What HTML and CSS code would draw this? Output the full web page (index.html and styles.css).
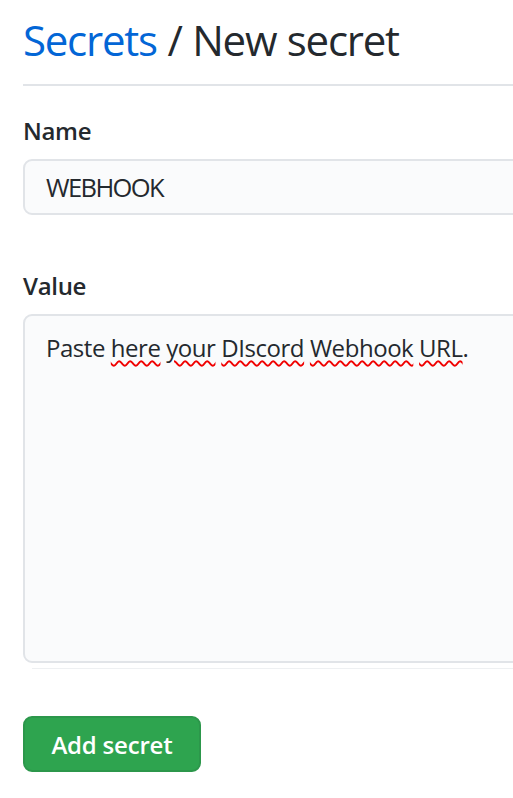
FILE: index.html
```html
<!DOCTYPE html>
<html lang="en">
<head>
<meta charset="utf-8">
<title>New secret</title>
<link rel="stylesheet" href="styles.css">
</head>
<body>
<div class="page">
  <h2 class="subhead"><a class="crumb" href="#">Secrets</a> / New secret</h2>
  <form class="form">
    <label class="label" for="name">Name</label>
    <div class="input">WEBHOOK</div>
    <label class="label label-value" for="value">Value</label>
    <div class="textarea">Paste <span class="sp">here</span> <span class="sp">your</span> <span class="sp">DIscord</span> <span class="sp">Webhook</span> <span class="sp">URL</span>.</div>
    <div class="sep"></div>
    <button class="btn" type="button">Add secret</button>
  </form>
</div>
</body>
</html>
```
FILE: styles.css
```css
html, body {
  margin: 0;
  padding: 0;
  background: #ffffff;
  overflow: hidden;
}
body {
  font-family: "Open Sans", "Noto Sans", sans-serif;
  color: #24292e;
}
.page {
  width: 620px;
  padding: 14px 0 0 23px;
}
.subhead {
  margin: 0;
  font-size: 42px;
  font-weight: 400;
  line-height: 52px;
  padding-bottom: 18px;
  border-bottom: 2px solid #e1e4e8;
  letter-spacing: -1.25px;
  word-spacing: 1px;
}
.crumb {
  color: #0366d6;
  text-decoration: none;
}
.form {
  display: flex;
  flex-direction: column;
  align-items: flex-start;
}
.label {
  display: block;
  font-size: 24px;
  font-weight: 600;
  line-height: 36px;
  margin-top: 27px;
  margin-bottom: 10px;
  letter-spacing: -0.3px;
}
.label-value {
  margin-top: 53px;
}
.input {
  box-sizing: border-box;
  width: 100%;
  height: 56px;
  padding: 0 21px;
  border: 2px solid #e1e4e8;
  border-radius: 9px;
  background: #fafbfc;
  font-size: 25.5px;
  line-height: 53px;
  letter-spacing: -1.6px;
}
.textarea {
  box-sizing: border-box;
  width: 100%;
  height: 349px;
  padding: 14px 21px;
  border: 2px solid #e1e4e8;
  border-radius: 9px;
  background: #fafbfc;
  font-size: 24px;
  line-height: 36px;
  letter-spacing: -0.45px;
}
.sp {
  text-decoration: underline wavy #f00000;
  text-decoration-thickness: 1.5px;
  text-underline-offset: 3px;
}
.sep {
  align-self: stretch;
  margin: 5px 0 0 9px;
  height: 1px;
  background: #eef0f2;
}
.btn {
  margin-top: 47px;
  box-sizing: border-box;
  width: 178px;
  height: 56px;
  border: 2px solid #2c974b;
  border-radius: 9px;
  background: #2ea44f;
  color: #ffffff;
  font-family: "Open Sans", "Noto Sans", sans-serif;
  font-size: 24px;
  font-weight: 600;
  letter-spacing: -0.2px;
  padding: 0;
}
```
